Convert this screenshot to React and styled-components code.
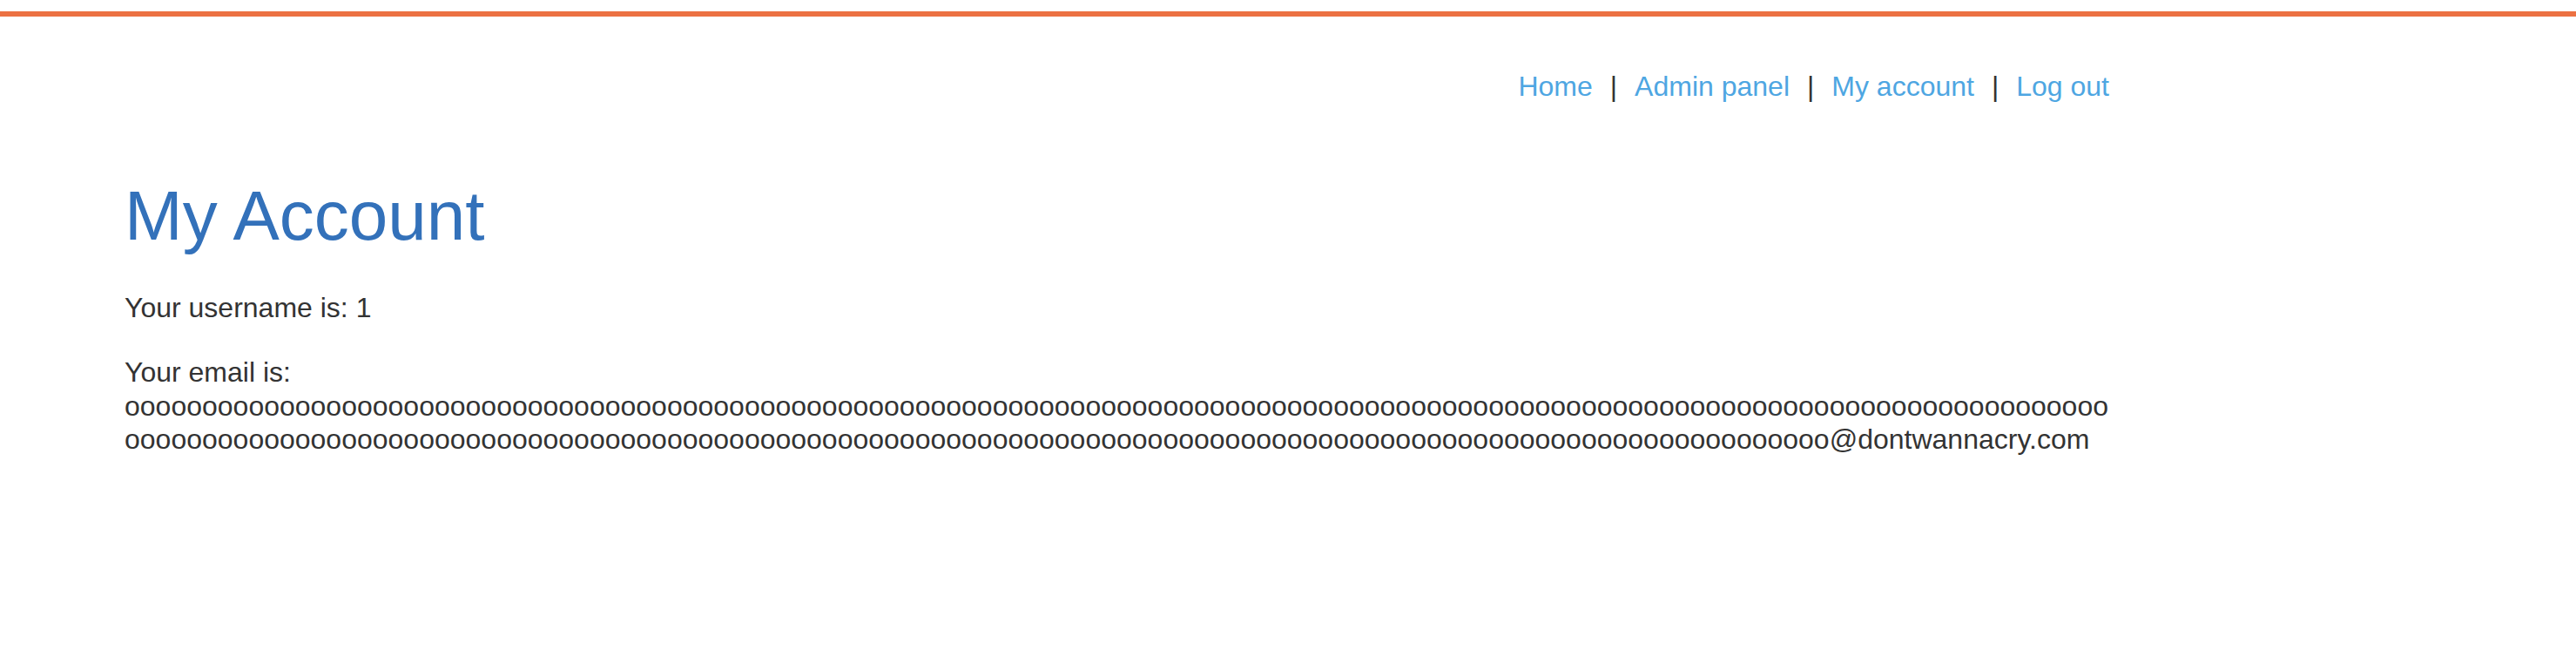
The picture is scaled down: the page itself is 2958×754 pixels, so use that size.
import React from 'react';
import styled, {createGlobalStyle} from 'styled-components';

const GlobalStyle = createGlobalStyle`
    html, body {
        margin: 0;
        padding: 0;
        background: #fff;
    }
    body {
        font-family: "Liberation Sans", Arial, sans-serif;
        color: #333;
    }
`;

const Page = styled.div`
    padding-top: 13px;
`;

const TopBar = styled.div`
    height: 6px;
    background-color: #ec7142;
`;

const Container = styled.div`
    width: 2279px;
    margin-left: 143px;
`;

const TopLinks = styled.nav`
    display: flex;
    justify-content: flex-end;
    align-items: baseline;
    gap: 20px;
    margin-top: 62px;
    font-size: 32px;
    line-height: 36px;
`;

const NavLink = styled.a`
    color: #4ea6e2;
    text-decoration: none;
    cursor: pointer;
`;

const Separator = styled.span`
    color: #333;
`;

const Title = styled.h1`
    margin: 86px 0 0;
    font-size: 80px;
    line-height: 90px;
    font-weight: normal;
    color: #3371ba;
`;

const Line = styled.p`
    margin: ${props => props.gap || 0}px 0 0;
    font-size: 32px;
    line-height: 38.3px;
    overflow-wrap: break-word;
`;

const links = ['Home', 'Admin panel', 'My account', 'Log out'];

const email = 'o'.repeat(238) + '@dontwannacry.com';

export default function App() {
    return (
        <Page>
            <GlobalStyle />
            <TopBar />
            <Container>
                <TopLinks>
                    {links.map((label, i) => (
                        <React.Fragment key={label}>
                            {i > 0 && <Separator>|</Separator>}
                            <NavLink>{label}</NavLink>
                        </React.Fragment>
                    ))}
                </TopLinks>
                <Title>My Account</Title>
                <Line gap={41}>Your username is: 1</Line>
                <Line gap={36}>Your email is: {email}</Line>
            </Container>
        </Page>
    );
}
